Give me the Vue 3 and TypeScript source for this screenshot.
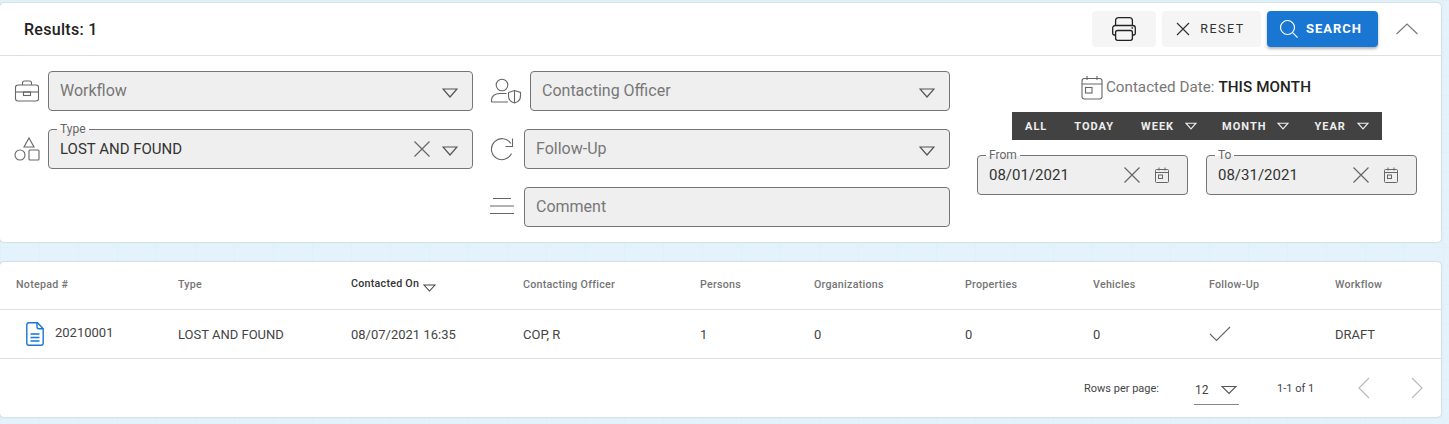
<script setup lang="ts">
const columns: { label: string; sorted?: boolean }[] = [
  { label: 'Notepad #' },
  { label: 'Type' },
  { label: 'Contacted On', sorted: true },
  { label: 'Contacting Officer' },
  { label: 'Persons' },
  { label: 'Organizations' },
  { label: 'Properties' },
  { label: 'Vehicles' },
  { label: 'Follow-Up' },
  { label: 'Workflow' },
];

const ranges: { label: string; menu: boolean }[] = [
  { label: 'ALL', menu: false },
  { label: 'TODAY', menu: false },
  { label: 'WEEK', menu: true },
  { label: 'MONTH', menu: true },
  { label: 'YEAR', menu: true },
];
</script>

<template>
  <div class="page">
    <section class="card filters">
      <header class="filters__head">
        <span class="results">Results: 1</span>
        <div class="actions">
          <button class="btn btn--print" aria-label="Print">
            <svg width="24" height="24" viewBox="0 0 24 24" fill="none" stroke="#222" stroke-width="1.3">
              <path d="M3.6 8.500V3.500a2.800 2.800 0 0 1 2.800-2.800h11.200a2.800 2.800 0 0 1 2.800 2.800v5" />
              <path d="M3.600 18H2.200a1.500 1.500 0 0 1-1.500-1.500v-5.500a2.500 2.500 0 0 1 2.500-2.500h17.600a2.500 2.500 0 0 1 2.500 2.500v5.500a1.500 1.500 0 0 1-1.500 1.500h-1.400" />
              <rect x="3.600" y="13.500" width="16.800" height="9.800" rx="2" />
              <path d="M19.500 11h1.500" />
            </svg>
          </button>
          <button class="btn btn--reset">
            <svg width="14" height="14" viewBox="0 0 14 14" fill="none" stroke="#333" stroke-width="1.2"><path d="M1 1l12 12M13 1L1 13" /></svg>
            <span>RESET</span>
          </button>
          <button class="btn btn--search">
            <svg width="20" height="20" viewBox="0 0 20 20" fill="none" stroke="#fff" stroke-width="1.2"><circle cx="8.500" cy="8.500" r="7" /><path d="M13.600 13.600l5 5" /></svg>
            <span>SEARCH</span>
          </button>
          <button class="collapse" aria-label="Collapse">
            <svg width="24" height="12" viewBox="0 0 24 12" fill="none" stroke="#777" stroke-width="1.1"><path d="M1.500 11L12 1l10.500 10" /></svg>
          </button>
        </div>
      </header>

      <div class="filters__body">
        <div class="col col--left">
          <div class="row">
            <svg class="icon" width="26" height="24" viewBox="0 0 26 24" fill="none" stroke="#666" stroke-width="1.1">
              <path d="M8.500 6V4a2 2 0 0 1 2-2h5a2 2 0 0 1 2 2v2" />
              <rect x="1.500" y="6" width="23" height="16" rx="2.500" />
              <path d="M1.500 13h23" />
              <rect x="9.500" y="13" width="7" height="3.500" />
            </svg>
            <div class="field field--muted">
              <span class="field__text">Workflow</span>
              <svg class="caret" width="16" height="10" viewBox="0 0 16 10" fill="none" stroke="#555" stroke-width="1.200"><path d="M1 1h14L8 9z" /></svg>
            </div>
          </div>
          <div class="row">
            <svg class="icon" width="26" height="26" viewBox="0 0 26 26" fill="none" stroke="#666" stroke-width="1.1">
              <path d="M15 2l5 9H10z" />
              <circle cx="6" cy="19" r="5" />
              <rect x="15" y="14" width="10" height="10" rx="1" />
            </svg>
            <div class="field">
              <span class="field__legend">Type</span>
              <span class="field__text field__text--value">LOST AND FOUND</span>
              <svg class="clear" width="16" height="16" viewBox="0 0 16 16" fill="none" stroke="#666" stroke-width="1.200"><path d="M.5.500l15 15M15.500.500l-15 15" /></svg>
              <svg class="caret" width="16" height="10" viewBox="0 0 16 10" fill="none" stroke="#555" stroke-width="1.200"><path d="M1 1h14L8 9z" /></svg>
            </div>
          </div>
        </div>

        <div class="col col--middle">
          <div class="row">
            <svg class="icon" width="32" height="26" viewBox="0 0 32 26" fill="none" stroke="#666" stroke-width="1.1">
              <circle cx="12" cy="7" r="5.800" />
              <path d="M1.500 24v-2c0-4 3.500-6.500 8-6.500h7M1.500 24H18" />
              <path d="M18.500 14.500l6-2 6 2v3.500c0 3.500-2.500 6-6 7-3.500-1-6-3.500-6-7z" />
              <path d="M24.500 12.500v12.500" />
            </svg>
            <div class="field field--muted">
              <span class="field__text">Contacting Officer</span>
              <svg class="caret" width="16" height="10" viewBox="0 0 16 10" fill="none" stroke="#555" stroke-width="1.200"><path d="M1 1h14L8 9z" /></svg>
            </div>
          </div>
          <div class="row">
            <svg class="icon icon--short" width="24" height="24" viewBox="0 0 24 24" fill="none" stroke="#666" stroke-width="1.1">
              <path d="M21.500 16.500A10.500 10.500 0 1 1 20.800 6.500" />
              <path d="M22.500 1.500V9.500h-7" />
            </svg>
            <div class="field field--muted">
              <span class="field__text">Follow-Up</span>
              <svg class="caret" width="16" height="10" viewBox="0 0 16 10" fill="none" stroke="#555" stroke-width="1.200"><path d="M1 1h14L8 9z" /></svg>
            </div>
          </div>
          <div class="row">
            <svg class="icon icon--short icon--lines" width="24" height="18" viewBox="0 0 24 18" fill="none" stroke="#666" stroke-width="1.1">
              <path d="M3 1.500h18M0 9h24M0 16.500h24" />
            </svg>
            <div class="field field--muted">
              <span class="field__text">Comment</span>
            </div>
          </div>
        </div>

        <div class="col col--dates">
          <div class="date-title">
            <svg width="22" height="25" viewBox="0 0 22 25" fill="none" stroke="#666" stroke-width="1.100">
              <rect x="1" y="3.500" width="20" height="20.500" rx="2.500" />
              <path d="M1 9h20M6 1v4M16 1v4" />
              <rect x="4.500" y="12.500" width="6.500" height="5.500" />
            </svg>
            <span class="date-title__label">Contacted Date:</span>
            <strong>THIS MONTH</strong>
          </div>
          <div class="range-bar">
            <span v-for="range in ranges" :key="range.label" class="range" :class="{ 'range--menu': range.menu }">
              {{ range.label }}
              <svg v-if="range.menu" width="12" height="8" viewBox="0 0 12 8" fill="none" stroke="#eee" stroke-width="1.100"><path d="M1 1.200h10L6 6.800z" /></svg>
            </span>
          </div>
          <div class="date-fields">
            <div class="field field--date">
              <span class="field__legend">From</span>
              <span class="field__text field__text--value">08/01/2021</span>
              <svg class="clear" width="16" height="16" viewBox="0 0 16 16" fill="none" stroke="#666" stroke-width="1.200"><path d="M.5.500l15 15M15.500.500l-15 15" /></svg>
              <svg class="cal" width="14" height="16" viewBox="0 0 14 16" fill="none" stroke="#666"><rect x=".5" y="2.500" width="13" height="13" rx="1" /><path d="M.5 5.500h13M4 .5v3M10 .5v3" /><rect x="3.500" y="8" width="4" height="3.500" /></svg>
            </div>
            <div class="field field--date">
              <span class="field__legend">To</span>
              <span class="field__text field__text--value">08/31/2021</span>
              <svg class="clear" width="16" height="16" viewBox="0 0 16 16" fill="none" stroke="#666" stroke-width="1.200"><path d="M.5.500l15 15M15.500.500l-15 15" /></svg>
              <svg class="cal" width="14" height="16" viewBox="0 0 14 16" fill="none" stroke="#666"><rect x=".5" y="2.500" width="13" height="13" rx="1" /><path d="M.5 5.500h13M4 .5v3M10 .5v3" /><rect x="3.500" y="8" width="4" height="3.500" /></svg>
            </div>
          </div>
        </div>
      </div>
    </section>

    <section class="card results-table">
      <div class="grid grid--head">
        <span v-for="col in columns" :key="col.label" class="th" :class="{ 'th--sorted': col.sorted }">
          {{ col.label }}
          <svg v-if="col.sorted" class="th__caret" width="13" height="8" viewBox="0 0 13 8" fill="none" stroke="#444" stroke-width="1.100"><path d="M1 1h11L6.500 7z" /></svg>
        </span>
      </div>
      <div class="grid grid--row">
        <span class="notepad">
          <svg width="18" height="24" viewBox="0 0 18 24" fill="none" stroke="#1976d2" stroke-width="1.400">
            <path d="M3 .8h8.500l5.700 6V21a2.200 2.200 0 0 1-2.200 2.200H3A2.200 2.200 0 0 1 .8 21V3A2.200 2.200 0 0 1 3 .8z" />
            <path d="M11 .8v4a2 2 0 0 0 2 2h4.200M4.500 12h9M4.500 15.500h9M4.500 19h9" />
          </svg>
          <span class="notepad__id">20210001</span>
        </span>
        <span>LOST AND FOUND</span>
        <span>08/07/2021 16:35</span>
        <span>COP, R</span>
        <span>1</span>
        <span>0</span>
        <span>0</span>
        <span>0</span>
        <span class="check">
          <svg width="22" height="16" viewBox="0 0 22 16" fill="none" stroke="#666" stroke-width="1.100"><path d="M1 8l6.500 6.500L21 1" /></svg>
        </span>
        <span>DRAFT</span>
      </div>
      <footer class="pager">
        <span class="pager__label">Rows per page:</span>
        <span class="pager__select">
          <span>12</span>
          <svg width="16" height="10" viewBox="0 0 16 10" fill="none" stroke="#555" stroke-width="1.200"><path d="M1 1.500h14L8 8.500z" /></svg>
        </span>
        <span class="pager__count">1-1 of 1</span>
        <svg class="pager__prev" width="12" height="22" viewBox="0 0 12 22" fill="none" stroke="#bbb" stroke-width="1.200"><path d="M11 1L1 11l10 10" /></svg>
        <svg class="pager__next" width="12" height="22" viewBox="0 0 12 22" fill="none" stroke="#bbb" stroke-width="1.200"><path d="M1 1l10 10L1 21" /></svg>
      </footer>
    </section>
  </div>
</template>

<style>
html, body {
  margin: 0;
  height: 100%;
  overflow: hidden;
  background-color: #e4f3fb;
  background-image:
    linear-gradient(90deg, #e0f0f8 1px, transparent 1px),
    linear-gradient(#e0f0f8 1px, transparent 1px);
  background-size: 39px 100%, 100% 19px;
}
</style>

<style scoped>
.page {
  width: 1441px;
  padding-top: 3px;
  font-family: Roboto, "Liberation Sans", sans-serif;
  color: #333;
}

.card {
  background: #fff;
  border-radius: 4px;
  box-shadow: 0 0 2px rgba(0, 0, 0, 0.25);
}

.filters {
  height: 239px;
  display: flex;
  flex-direction: column;
}

.filters__head {
  height: 52px;
  flex: none;
  display: flex;
  align-items: center;
  justify-content: space-between;
  padding: 0 15px 0 24px;
  border-bottom: 1px solid #e0e0e0;
}

.results {
  font-size: 16px;
  font-weight: 500;
  letter-spacing: 0.300px;
  color: #222;
}

.actions {
  display: flex;
  align-items: center;
  margin-top: -1px;
}

.btn {
  height: 36px;
  border: none;
  border-radius: 4px;
  display: flex;
  align-items: center;
  justify-content: center;
  font-family: inherit;
  padding: 0;
}

.btn--print {
  width: 64px;
  background: #f5f5f5;
  margin-right: 6px;
}

.btn--reset {
  width: 99px;
  background: #f5f5f5;
  margin-right: 6px;
  padding-right: 2px;
  box-sizing: border-box;
  gap: 10px;
  font-size: 12.500px;
  letter-spacing: 1.500px;
  color: #333;
}

.btn--search {
  width: 111px;
  background: #1976d2;
  color: #fff;
  padding-right: 4px;
  box-sizing: border-box;
  gap: 7px;
  font-size: 13px;
  font-weight: 700;
  letter-spacing: 1px;
  box-shadow: 0 2px 3px rgba(0, 0, 0, 0.3);
}

.collapse {
  width: 40px;
  margin-left: 9px;
  margin-right: -1px;
  padding: 0;
  border: none;
  background: none;
  display: flex;
  justify-content: center;
}

.filters__body {
  flex: 1;
  display: flex;
  padding: 15px 24px 0 14px;
}

.col {
  display: flex;
  flex-direction: column;
  gap: 18px;
}

.col--left {
  width: 459px;
  margin-right: 17px;
}

.col--middle {
  width: 460px;
  margin-right: 27px;
}

.col--dates {
  width: 440px;
  gap: 0;
  align-items: center;
}

.row {
  display: flex;
  align-items: center;
  height: 40px;
}

.icon {
  flex: none;
  margin-right: 8px;
}

.icon--short {
  width: 24px;
  margin-right: 10px;
}

.icon--lines {
  margin-top: -2px;
}

.field {
  position: relative;
  flex: 1;
  height: 40px;
  box-sizing: border-box;
  display: flex;
  align-items: center;
  padding: 0 14px 0 11px;
  background: #efefef;
  border: 1px solid #757575;
  border-radius: 4px;
  font-size: 16px;
}

.field__text {
  flex: 1;
  color: #777;
  margin-top: -2px;
}

.field__text--value {
  color: #333;
  font-size: 15px;
  margin-top: 0;
}

.field__legend {
  position: absolute;
  top: -7px;
  left: 8px;
  padding: 0 3px;
  font-size: 12px;
  line-height: 13px;
  color: #666;
  background: linear-gradient(#fff 7px, #efefef 7px);
}

.clear {
  margin-right: 12px;
}

.caret {
  flex: none;
  margin-top: 3px;
}

.date-title {
  display: flex;
  align-items: center;
  gap: 3px;
  height: 32px;
  font-size: 15.200px;
  margin-left: -2px;
}

.date-title__label {
  color: #777;
  margin-right: 1px;
}

.date-title strong {
  font-weight: 500;
  letter-spacing: 0.100px;
  color: #222;
}

.range-bar {
  width: 370px;
  height: 28px;
  margin-top: 9px;
  background: #424242;
  display: flex;
  align-items: center;
  box-sizing: border-box;
  padding-left: 13px;
}

.range {
  display: inline-flex;
  align-items: center;
  gap: 11px;
  color: #eee;
  font-size: 11px;
  font-weight: 700;
  letter-spacing: 1px;
  margin-right: 27px;
}

.range--menu {
  margin-right: 25px;
}

.range--menu:last-child {
  margin-right: 0;
}

.date-fields {
  display: flex;
  gap: 18px;
  margin-top: 15px;
}

.field--date {
  flex: none;
  width: 211px;
  padding: 0 18px 0 11px;
}

.field--date .clear {
  margin-right: 15px;
}

.cal {
  flex: none;
}

.results-table {
  margin-top: 20px;
  height: 155px;
}

.grid {
  display: grid;
  grid-template-columns: 162px 173px 172px 177px 114px 151px 128px 116px 126px 1fr;
  padding-left: 16px;
  align-items: center;
  border-bottom: 1px solid #e0e0e0;
  box-sizing: border-box;
}

.grid--head {
  height: 48px;
}

.grid--row {
  height: 49px;
  font-size: 13px;
  color: #444;
}

.th {
  font-size: 10.700px;
  font-weight: 500;
  color: #757575;
  letter-spacing: 0.250px;
  white-space: nowrap;
  margin-top: -2px;
}

.th--sorted {
  color: #333;
}

.th__caret {
  vertical-align: -5px;
  margin-left: 1px;
}

.notepad {
  display: flex;
  align-items: center;
  padding-left: 10px;
  gap: 11px;
}

.notepad__id {
  margin-top: -4px;
}

.check {
  display: flex;
}

.pager {
  height: 58px;
  display: flex;
  align-items: center;
  font-size: 11px;
  color: #444;
  padding-left: 1084px;
}

.pager__label {
  width: 110px;
}

.pager__select {
  width: 45px;
  height: 30px;
  box-sizing: border-box;
  display: flex;
  align-items: center;
  gap: 12px;
  padding-left: 1px;
  font-size: 12px;
  border-bottom: 1px solid #888;
  margin-top: 4px;
}

.pager__count {
  margin-left: 38px;
  width: 81px;
}

.pager__prev {
  margin-right: 41px;
}
</style>
